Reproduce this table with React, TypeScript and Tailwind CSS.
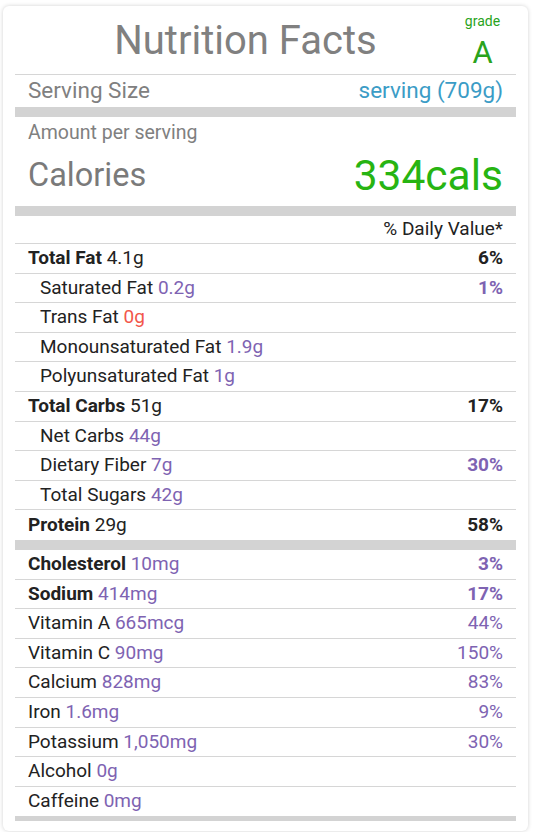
import React from "react";

type Row = {
  label: string;
  amount?: string;
  dv?: string;
  bold?: boolean;
  indent?: boolean;
  amtColor?: string;
  dvBold?: boolean;
  dvColor?: string;
};

const PURPLE = "text-[#7e63b2]";

const rows1: Row[] = [
  { label: "Total Fat", amount: "4.1g", dv: "6%", bold: true, amtColor: "text-[#222]", dvBold: true, dvColor: "text-[#222]" },
  { label: "Saturated Fat", amount: "0.2g", dv: "1%", indent: true, amtColor: PURPLE, dvBold: true, dvColor: PURPLE },
  { label: "Trans Fat", amount: "0g", indent: true, amtColor: "text-[#f2564b]" },
  { label: "Monounsaturated Fat", amount: "1.9g", indent: true, amtColor: PURPLE },
  { label: "Polyunsaturated Fat", amount: "1g", indent: true, amtColor: PURPLE },
  { label: "Total Carbs", amount: "51g", dv: "17%", bold: true, amtColor: "text-[#222]", dvBold: true, dvColor: "text-[#222]" },
  { label: "Net Carbs", amount: "44g", indent: true, amtColor: PURPLE },
  { label: "Dietary Fiber", amount: "7g", dv: "30%", indent: true, amtColor: PURPLE, dvBold: true, dvColor: PURPLE },
  { label: "Total Sugars", amount: "42g", indent: true, amtColor: PURPLE },
  { label: "Protein", amount: "29g", dv: "58%", bold: true, amtColor: "text-[#222]", dvBold: true, dvColor: "text-[#222]" },
];

const rows2: Row[] = [
  { label: "Cholesterol", amount: "10mg", dv: "3%", bold: true, amtColor: PURPLE, dvBold: true, dvColor: PURPLE },
  { label: "Sodium", amount: "414mg", dv: "17%", bold: true, amtColor: PURPLE, dvBold: true, dvColor: PURPLE },
  { label: "Vitamin A", amount: "665mcg", dv: "44%", amtColor: PURPLE, dvColor: PURPLE },
  { label: "Vitamin C", amount: "90mg", dv: "150%", amtColor: PURPLE, dvColor: PURPLE },
  { label: "Calcium", amount: "828mg", dv: "83%", amtColor: PURPLE, dvColor: PURPLE },
  { label: "Iron", amount: "1.6mg", dv: "9%", amtColor: PURPLE, dvColor: PURPLE },
  { label: "Potassium", amount: "1,050mg", dv: "30%", amtColor: PURPLE, dvColor: PURPLE },
  { label: "Alcohol", amount: "0g", amtColor: PURPLE },
  { label: "Caffeine", amount: "0mg", amtColor: PURPLE },
];

function NRow({ r, last }: { r: Row; last: boolean }) {
  return (
    <div
      className={`flex items-center justify-between h-[29.6px] pl-[13px] pr-[13px] text-[19px] text-[#222] ${
        last ? "" : "border-b border-[#d6d6d6]"
      }`}
    >
      <div className={r.indent ? "pl-[12px]" : ""}>
        <span className={r.bold ? "font-bold" : ""}>{r.label}</span>{" "}
        <span className={r.amtColor}>{r.amount}</span>
      </div>
      {r.dv && (
        <span className={`${r.dvBold ? "font-bold" : ""} ${r.dvColor}`}>{r.dv}</span>
      )}
    </div>
  );
}

export default function App() {
  return (
    <div className="min-h-[832px] bg-white pt-[6px] pl-[3px]" style={{ fontFamily: "Roboto, 'Liberation Sans', sans-serif" }}>
      <div className="w-[525px] rounded-[6px] bg-white shadow-[0_0_4px_rgba(0,0,0,0.18)] px-[12px] pt-[7px] pb-[10px]">
        <div className="flex items-start h-[62px] border-b border-[#d6d6d6] pl-[13px] pr-[13px]">
          <div className="flex-1 text-center text-[40px] leading-[56px] text-[#808080]">Nutrition Facts</div>
          <div className="flex flex-col items-center w-[40px] pr-[1px]">
            <span className="text-[14px] leading-[16px] text-[#2aa31c]">grade</span>
            <span className="mt-[4px] text-[31px] leading-[40px] text-[#2aa31c]">A</span>
          </div>
        </div>
        <div className="flex items-center justify-between h-[32px] pl-[13px] pr-[13px] text-[22.5px] text-[#808080]">
          <span>Serving Size</span>
          <span className="text-[#3b9cc6]">serving (709g)</span>
        </div>
        <div className="h-[10px] bg-[#d3d3d3]" />
        <div className="pl-[13px] pr-[13px] pt-[3px] text-[19.5px] leading-[25px] text-[#808080]">Amount per serving</div>
        <div className="flex items-center justify-between h-[61px] pl-[13px] pr-[13px]">
          <span className="text-[32.5px] text-[#7a7a7a]">Calories</span>
          <span className="text-[42.5px] text-[#27b412]">334cals</span>
        </div>
        <div className="h-[10px] bg-[#d3d3d3]" />
        <div className="flex justify-end h-[28px] items-center border-b border-[#d6d6d6] pr-[13px] text-[19px] text-[#222]">% Daily Value*</div>
        {rows1.map((r, i) => (
          <NRow key={r.label} r={r} last={i === rows1.length - 1} />
        ))}
        <div className="h-[10px] bg-[#d3d3d3]" />
        {rows2.map((r, i) => (
          <NRow key={r.label} r={r} last={i === rows2.length - 1} />
        ))}
        <div className="h-[5px] bg-[#d3d3d3]" />
      </div>
    </div>
  );
}
